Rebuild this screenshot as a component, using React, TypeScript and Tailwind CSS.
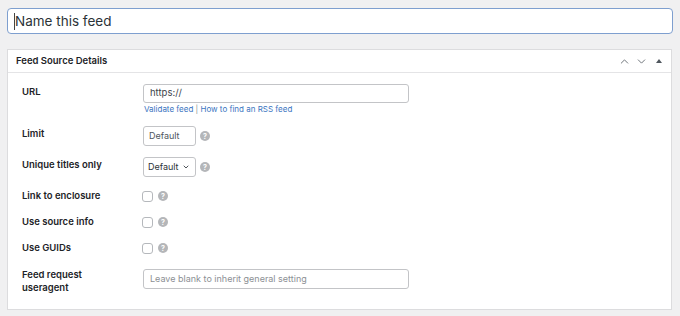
import { ChevronUp, ChevronDown } from "lucide-react";

const font = { fontFamily: "Inter, 'Noto Sans', sans-serif" };

function HelpIcon({ ml }: { ml: string }) {
  return (
    <span
      className={`flex h-[10px] w-[10px] shrink-0 items-center justify-center rounded-full bg-[#b4b6b9] text-[7px] leading-none font-bold text-white ${ml}`}
    >
      ?
    </span>
  );
}

function CheckRow({ label, mt }: { label: string; mt: string }) {
  return (
    <div className={`flex h-[14px] items-center ${mt}`}>
      <div className="w-[121px] text-[9.5px] leading-[14px] font-semibold text-[#1d2327]">{label}</div>
      <span className="ml-[-1px] h-[11px] w-[11px] rounded-[3px] border border-[#b5b8bc] bg-white" />
      <HelpIcon ml="ml-[5px]" />
    </div>
  );
}

export default function App() {
  return (
    <div className="h-[316px] w-[680px] bg-[#f0f0f1] px-[7px] pt-[8px]" style={font}>
      <div className="flex h-[26px] items-center rounded-[4px] border border-[#7e9fcf] bg-white pl-[6px] text-[13.5px] text-[#2c3338]">
        <span className="h-[17px] w-px bg-[#444]" />
        <span>Name this feed</span>
      </div>

      <div className="mt-[15px] w-[665px] border border-[#dcdcde] bg-white">
        <div className="flex h-[23px] items-center justify-between border-b border-[#e4e4e6] pl-[8px] pr-[9px]">
          <span className="text-[9.5px] font-semibold text-[#1d2327]">Feed Source Details</span>
          <div className="flex items-center text-[#50575e]">
            <ChevronUp size={13} strokeWidth={1.5} />
            <ChevronDown size={13} strokeWidth={1.5} className="ml-[4px]" />
            <span className="ml-[8px] h-0 w-0 border-x-[3px] border-b-[4px] border-x-transparent border-b-[#50575e]" />
          </div>
        </div>

        <div className="pl-[14px] pb-[15px] pt-[11px]">
          {/* URL */}
          <div className="flex items-start">
            <div className="w-[121px] pt-[1px] text-[9.5px] leading-[14px] font-semibold text-[#1d2327]">URL</div>
            <div>
              <div className="flex h-[19px] w-[266px] items-center rounded-[3px] border border-[#c3c4c7] px-[6px] text-[9.5px] text-[#3c434a]">
                https://
              </div>
              <div className="pl-[1px] text-[8px] leading-[12px] text-[#3b75bf]">
                Validate feed <span className="text-[#8c8f94]">|</span> How to find an RSS feed
              </div>
            </div>
          </div>

          {/* Limit */}
          <div className="mt-[11px] flex items-start">
            <div className="w-[121px] pt-[1px] text-[9.5px] leading-[14px] font-semibold text-[#1d2327]">Limit</div>
            <div className="flex items-center">
              <div className="flex h-[20px] w-[53px] items-center rounded-[3px] border border-[#c3c4c7] px-[5px] text-[9px] text-[#50575e]">
                Default
              </div>
              <HelpIcon ml="ml-[4px]" />
            </div>
          </div>

          {/* Unique titles */}
          <div className="mt-[11px] flex items-start">
            <div className="w-[121px] pt-[1px] text-[9.5px] leading-[14px] font-semibold text-[#1d2327]">Unique titles only</div>
            <div className="flex items-center">
              <div className="flex h-[20px] w-[53px] items-center rounded-[3px] border border-[#c3c4c7] pl-[4px] text-[9px] text-[#2c3338]">
                Default
                <ChevronDown size={8} strokeWidth={2.5} className="ml-[3px]" />
              </div>
              <HelpIcon ml="ml-[4px]" />
            </div>
          </div>

          <CheckRow label="Link to enclosure" mt="mt-[12px]" />
          <CheckRow label="Use source info" mt="mt-[12px]" />
          <CheckRow label="Use GUIDs" mt="mt-[12px]" />

          {/* Useragent */}
          <div className="mt-[13px] flex items-start">
            <div className="w-[121px] text-[9.5px] leading-[13px] font-semibold text-[#1d2327]">
              Feed request
              <br />
              useragent
            </div>
            <div className="mt-[1px] flex h-[20px] w-[266px] items-center rounded-[3px] border border-[#c3c4c7] px-[6px] text-[9px] text-[#8c8f94]">
              Leave blank to inherit general setting
            </div>
          </div>
        </div>
      </div>
    </div>
  );
}
